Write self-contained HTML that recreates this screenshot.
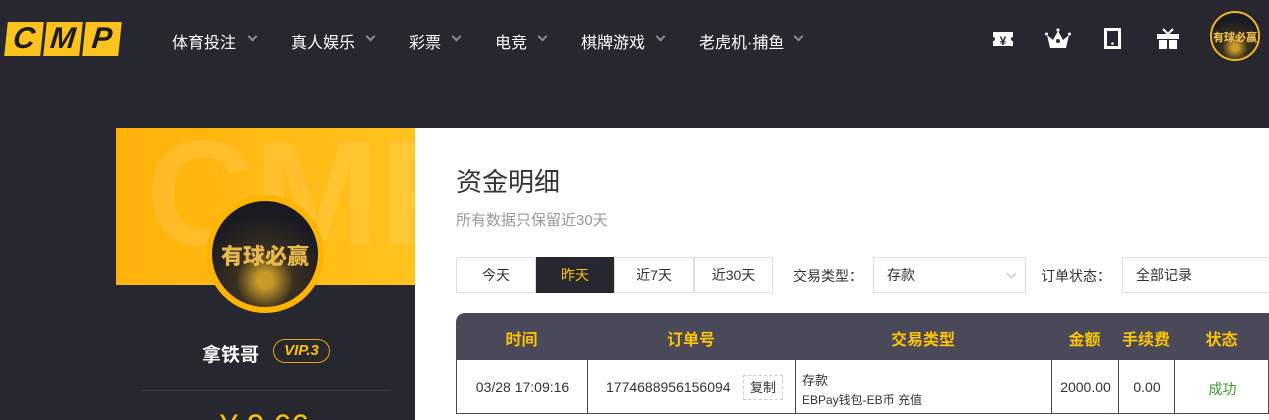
<!DOCTYPE html>
<html><head><meta charset="utf-8"><style>
*{margin:0;padding:0;box-sizing:border-box}
html,body{width:1269px;height:420px;overflow:hidden}
body{background:#272730;font-family:"Liberation Sans","Noto Sans CJK SC",sans-serif;position:relative}
.logo{position:absolute;top:22px;left:6px;display:flex;gap:3px}
.logo div{width:36px;height:34px;background:#fcc31e;transform:skewX(-6deg);color:#1c1c22;font:italic 900 30px/34px "Liberation Sans",sans-serif;text-align:center}
.nav span{position:absolute;top:29px;color:#fff;font-size:16px}
.nav i{position:absolute;top:33px;width:7px;height:7px;border-right:2.5px solid #8a8a96;border-bottom:2.5px solid #8a8a96;transform:rotate(45deg)}
.ic{position:absolute;top:28px}
.av{position:absolute;border-radius:50%;background:radial-gradient(circle at 50% 75%,#c99a2a 0 8%,#3a3020 30%,#1a1a22 70%);overflow:hidden}
.av b{position:absolute;left:0;right:0;text-align:center;color:#e8b94a;font-weight:900}
.side{position:absolute;left:116px;top:128px;width:299px;height:292px;background:#272730;overflow:hidden}
.yel{position:absolute;left:0;top:0;width:299px;height:157px;background:linear-gradient(90deg,#ffb20a,#ffc21e);overflow:hidden}
.yel span{position:absolute;left:30px;top:-10px;font:bold 150px/1 "Liberation Sans",sans-serif;color:rgba(255,255,255,.1)}
.main{position:absolute;left:415px;top:128px;width:854px;height:292px;background:#fff;overflow:hidden}
.btn{position:absolute;top:129px;height:36px;border:1px solid #e0e0e0;font-size:14px;line-height:34px;text-align:center;color:#333}
.th{position:absolute;left:41px;top:185px;width:813px;height:47px;background:#4a4959;border-radius:9px 0 0 0;color:#ffc400;font-size:16px;font-weight:bold}
.th span,.td span{position:absolute;text-align:center}
.th span{top:13px}
.td{position:absolute;left:41px;top:232px;width:813px;height:54px;border:1px solid #4a4959;border-top:none;font-size:14px;color:#333}
.td i{position:absolute;top:0;bottom:0;width:1px;background:#4a4959}
</style></head><body>
<div class="logo"><div>C</div><div>M</div><div>P</div></div>
<div class="nav">
<span style="left:172px">体育投注</span><i style="left:249px"></i>
<span style="left:291px">真人娱乐</span><i style="left:367px"></i>
<span style="left:409px">彩票</span><i style="left:453px"></i>
<span style="left:495px">电竞</span><i style="left:539px"></i>
<span style="left:581px">棋牌游戏</span><i style="left:657px"></i>
<span style="left:699px">老虎机·捕鱼</span><i style="left:795px"></i>
</div>
<svg class="ic" style="left:992px" width="22" height="22" viewBox="0 0 22 22"><path d="M1 4h20v5a2 2 0 0 0 0 4v5H1v-5a2 2 0 0 0 0-4z" fill="#fff"/><text x="11" y="17" font-size="12" font-weight="bold" text-anchor="middle" fill="#272730">¥</text></svg>
<svg class="ic" style="left:1045px" width="26" height="22" viewBox="0 0 26 22"><path d="M2 7l6 5 5-9 5 9 6-5-3 13H5z" fill="#fff"/><circle cx="13" cy="2" r="1.6" fill="#fff"/><circle cx="1.5" cy="6" r="1.5" fill="#fff"/><circle cx="24.5" cy="6" r="1.5" fill="#fff"/><circle cx="13" cy="13" r="2" fill="#272730"/></svg>
<svg class="ic" style="left:1104px" width="18" height="22" viewBox="0 0 18 22"><rect x="1.5" y="1.5" width="14" height="18" fill="none" stroke="#fff" stroke-width="3"/><circle cx="8.5" cy="15.5" r="1.3" fill="#fff"/></svg>
<svg class="ic" style="left:1156px" width="24" height="22" viewBox="0 0 24 22"><path d="M1 6h22v5H1zM3 12h8v9H3zM13 12h8v9h-8z" fill="#fff"/><path d="M12 6L7 1M12 6l5-5" stroke="#fff" stroke-width="2"/></svg>
<div class="av" style="left:1210px;top:11px;width:50px;height:50px;border:2px solid #f4b422"><b style="top:16px;font-size:11px">有球必赢</b></div>
<div class="side">
<div class="yel"><span>CMP</span></div>
<div class="av" style="left:90px;top:67px;width:118px;height:118px;border:6px solid #ffb400"><b style="top:38px;font-size:22px">有球必赢</b></div>
<div style="position:absolute;top:212px;left:86px;color:#fff;font-size:19px;font-weight:bold">拿铁哥</div>
<div style="position:absolute;top:211px;left:157px;width:57px;height:24px;border:1px solid #e8a800;border-radius:12px;color:#ffc400;font:italic bold 15px/22px 'Liberation Sans',sans-serif;text-align:center">VIP.3</div>
<div style="position:absolute;top:262px;left:25px;width:250px;height:1px;background:#3c3c48"></div>
<div style="position:absolute;top:280px;left:104px;color:#ffc400;font-size:32px">¥ 9.66</div>
</div>
<div class="main">
<div style="position:absolute;left:41px;top:34px;font-size:26px;color:#333">资金明细</div>
<div style="position:absolute;left:41px;top:81px;font-size:15px;color:#999">所有数据只保留近30天</div>
<div class="btn" style="left:41px;width:80px">今天</div>
<div class="btn" style="left:121px;width:78px;background:#272730;border-color:#272730;color:#ffc400">昨天</div>
<div class="btn" style="left:199px;width:80px">近7天</div>
<div class="btn" style="left:279px;width:79px">近30天</div>
<div style="position:absolute;left:378px;top:138px;font-size:14px;color:#333">交易类型：</div>
<div class="btn" style="left:458px;width:153px;text-align:left;padding-left:13px">存款<span style="position:absolute;right:10px;top:12px;width:7px;height:7px;border-right:1px solid #bbb;border-bottom:1px solid #bbb;transform:rotate(45deg)"></span></div>
<div style="position:absolute;left:626px;top:138px;font-size:14px;color:#333">订单状态：</div>
<div class="btn" style="left:707px;width:160px;text-align:left;padding-left:13px">全部记录</div>
<div class="th"><span style="left:0;width:131px">时间</span><span style="left:131px;width:208px">订单号</span><span style="left:339px;width:256px">交易类型</span><span style="left:595px;width:67px">金额</span><span style="left:662px;width:56px">手续费</span><span style="left:718px;width:95px">状态</span></div>
<div class="td"><i style="left:130px"></i><i style="left:338px"></i><i style="left:594px"></i><i style="left:661px"></i><i style="left:717px"></i>
<span style="left:0;width:131px;top:19px">03/28 17:09:16</span>
<span style="left:149px;top:19px">1774688956156094</span>
<span style="left:286px;top:15px;width:40px;height:25px;border:1px dashed #ccc;line-height:23px;font-size:13px">复制</span>
<span style="left:345px;top:10px;text-align:left;font-size:13px">存款</span>
<span style="left:345px;top:31px;text-align:left;font-size:12px">EBPay钱包-EB币 充值</span>
<span style="left:595px;width:67px;top:19px">2000.00</span>
<span style="left:662px;width:56px;top:19px">0.00</span>
<span style="left:718px;width:95px;top:19px;color:#3a9a2a">成功</span>
</div>
</div>
</body></html>
